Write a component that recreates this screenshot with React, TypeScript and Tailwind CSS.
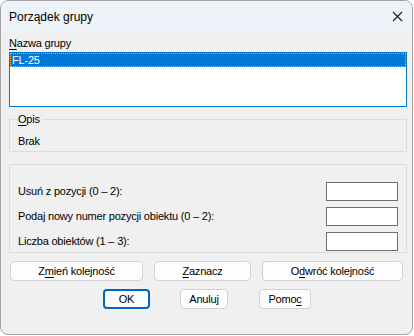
import React from "react";

const F = { fontFamily: '"Liberation Sans", Arial, sans-serif' };

function U({ children }: { children: React.ReactNode }) {
  return <span className="underline underline-offset-[2px] decoration-1">{children}</span>;
}

function Btn({ w, children, def }: { w: string; children: React.ReactNode; def?: boolean }) {
  return (
    <button
      className={
        "h-[20px] rounded-[4px] bg-[#fdfdfd] text-[11px] leading-[13px] tracking-[-0.2px] text-black flex items-center justify-center " +
        w +
        (def ? " border-2 border-[#0067c0]" : " border border-[#d0d0d0]")
      }
    >
      {children}
    </button>
  );
}

function Row({ label }: { label: string }) {
  return (
    <div className="flex items-center justify-between h-[19px]">
      <span className="text-[11px] leading-[13px] tracking-[-0.2px]">{label}</span>
      <div className="w-[72px] h-[19px] bg-white border border-[#6e6e6e]" />
    </div>
  );
}

export default function App() {
  return (
    <div className="w-[414px] h-[336px] bg-white" style={F}>
      <div className="w-[413px] h-[335px] border border-[#a3a3a3] rounded-[8px] overflow-hidden bg-[#f0f0f0] flex flex-col text-black">
        <div className="h-[30px] bg-[#eef3f9] flex items-center justify-between pl-[8px] pr-[8px] shrink-0">
          <span className="text-[12px] leading-[14px] mt-[1px]">Porządek grupy</span>
          <svg width="11" height="11" viewBox="0 0 11 11" className="mr-[1px] mt-[1px]">
            <path d="M1 1 L10 10 M10 1 L1 10" stroke="#1a1a1a" strokeWidth="1.1" />
          </svg>
        </div>
        <div className="px-[8px] pt-[6px] flex flex-col">
          <div className="text-[11px] leading-[13px] tracking-[-0.2px]">
            <U>N</U>azwa grupy
          </div>
          <div className="mt-[2px] h-[55px] w-[398px] border border-[#0078d7] bg-white">
            <div className="h-[14px] bg-[#0078d7] border border-dotted border-[#f5a04a] text-white text-[11px] leading-[12px] tracking-[-0.2px] pl-[1px]">
              FL-25
            </div>
          </div>
          <fieldset className="mt-[6px] w-[398px] border border-[#dcdcdc] pl-[8px] pr-[8px]">
            <legend className="text-[11px] leading-[13px] tracking-[-0.2px] pr-[2px]">
              <U>O</U>pis
            </legend>
            <div className="h-[25px] pt-[9px] text-[11px] leading-[13px] tracking-[-0.2px]">Brak</div>
          </fieldset>
          <div className="mt-[12px] w-[398px] h-[89px] border border-[#dcdcdc] pt-[17px] pl-[8px] pr-[8px] flex flex-col gap-[6px]">
            <Row label="Usuń z pozycji (0 – 2):" />
            <Row label="Podaj nowy numer pozycji obiektu (0 – 2):" />
            <Row label="Liczba obiektów (1 – 3):" />
          </div>
          <div className="mt-[8px] flex gap-[11px] pl-[1px]">
            <Btn w="w-[133px]">
              Z<U>m</U>ień kolejność
            </Btn>
            <Btn w="w-[97px]">
              <U>Z</U>aznacz
            </Btn>
            <Btn w="w-[141px]">
              O<U>d</U>wróć kolejność
            </Btn>
          </div>
          <div className="mt-[8px] flex pl-[94px]">
            <Btn w="w-[47px]" def>
              OK
            </Btn>
            <div className="w-[30px]" />
            <Btn w="w-[48px]">Anuluj</Btn>
            <div className="w-[31px]" />
            <Btn w="w-[52px]">
              Pomo<U>c</U>
            </Btn>
          </div>
        </div>
      </div>
    </div>
  );
}
